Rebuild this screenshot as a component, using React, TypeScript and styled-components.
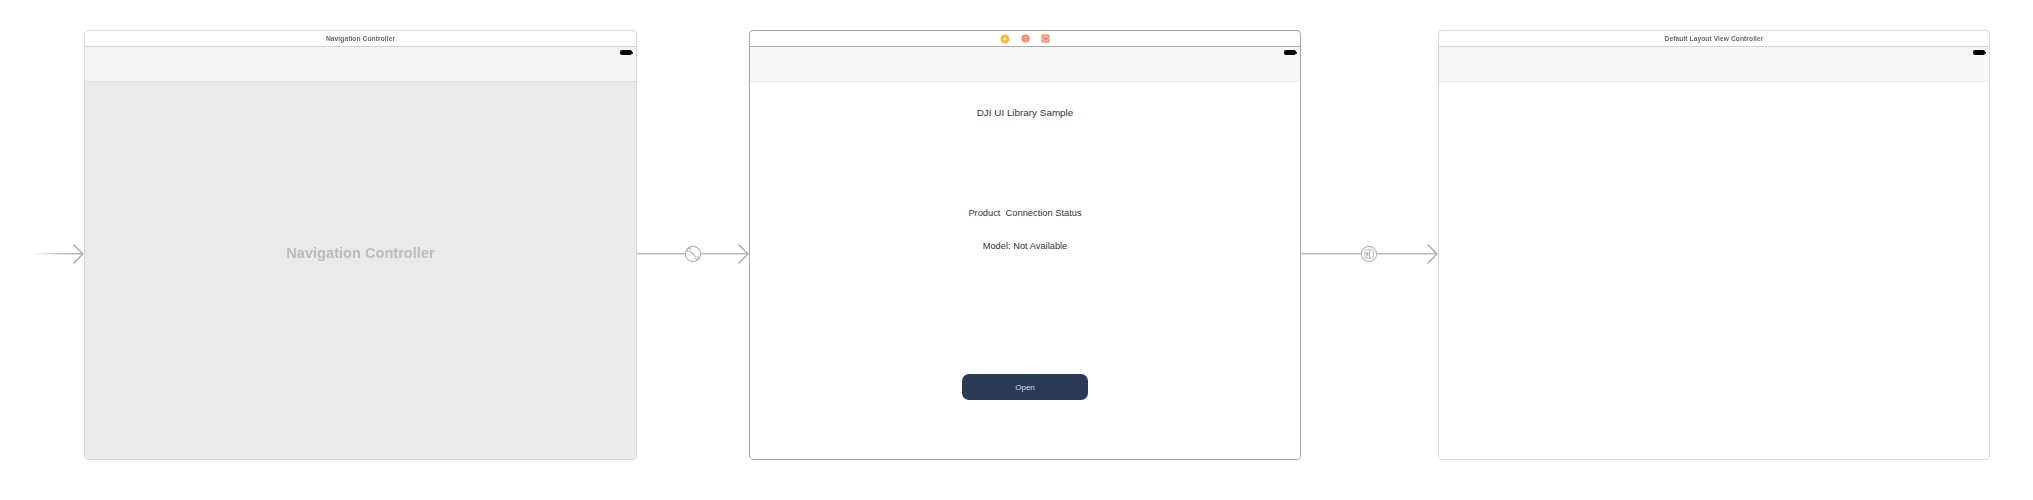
import React from "react";
import styled, { createGlobalStyle } from "styled-components";

const Global = createGlobalStyle`
  html, body { margin: 0; padding: 0; background: #ffffff; }
  body { font-family: "Liberation Sans", Arial, sans-serif; }
`;

const Canvas = styled.div`
  display: flex;
  align-items: stretch;
  width: 2033px;
  height: 500px;
  box-sizing: border-box;
  padding: 30px 0 40px 32px;
  overflow: hidden;
  filter: blur(0.35px);
`;

const Connector = styled.div<{ $w: number }>`
  flex: none;
  width: ${(p) => p.$w}px;
  padding-top: 17px;
  display: flex;
  align-items: center;
  svg { display: block; }
`;

const Scene = styled.section<{ $selected?: boolean; $w?: number }>`
  flex: none;
  width: ${(p) => p.$w ?? 552}px;
  box-sizing: border-box;
  display: flex;
  flex-direction: column;
  background: #fff;
  border: 1px solid ${(p) => (p.$selected ? "#a3a3a3" : "#d8d8d8")};
  border-radius: 4px;
  overflow: hidden;
`;

const TitleBar = styled.header<{ $selected?: boolean }>`
  flex: none;
  height: 15px;
  display: flex;
  align-items: center;
  justify-content: center;
  gap: 11px;
  border-bottom: 1px solid ${(p) => (p.$selected ? "#a9a9a9" : "#d2d2d2")};
  font-size: 6.6px;
  font-weight: 700;
  color: #666;
  letter-spacing: 0.1px;
`;

const NavBar = styled.div<{ $shade: string; $rule: string }>`
  flex: none;
  height: 35px;
  box-sizing: border-box;
  display: flex;
  justify-content: flex-end;
  align-items: flex-start;
  padding: 3px 3px 0 0;
  background: ${(p) => p.$shade};
  border-bottom: 1px solid ${(p) => p.$rule};
`;

const Battery = styled.span`
  position: relative;
  display: block;
  width: 12px;
  height: 5px;
  margin-right: 1px;
  border-radius: 2px;
  background: #000;
  &::after {
    content: "";
    position: absolute;
    right: -1px;
    top: 1.5px;
    width: 1px;
    height: 2px;
    background: #333;
  }
`;

const Placeholder = styled.div`
  flex: 1;
  display: flex;
  align-items: center;
  justify-content: center;
  padding-bottom: 35px;
  background: #eaeaea;
  color: #bcbcbc;
  font-size: 14.6px;
  font-weight: 700;
`;

const Screen = styled.div`
  flex: 1;
  display: flex;
  flex-direction: column;
  align-items: center;
  background: #fff;
  color: #333;
`;

const Label = styled.div<{ $top: number }>`
  margin-top: ${(p) => p.$top}px;
  font-size: 9.3px;
  line-height: 14px;
  white-space: pre;
`;

const Heading = styled(Label)`
  font-size: 9.9px;
`;

const OpenButton = styled.button`
  margin-top: 121px;
  width: 126px;
  height: 26px;
  border: none;
  border-radius: 7px;
  background: #2b3b57;
  color: #d5d9e1;
  font: 400 8px "Liberation Sans", Arial, sans-serif;
  padding: 0;
`;

const Arrow = ({ w, fade, badge, kind }: { w: number; fade?: boolean; badge?: number; kind?: "tool" | "split" }) => (
  <svg width={w} height="22" viewBox={`0 0 ${w} 22`} fill="none">
    <defs>
      <linearGradient id="fadeLine" x1="0" x2="1" y1="0" y2="0">
        <stop offset="0" stopColor="#bbb" stopOpacity="0" />
        <stop offset="0.6" stopColor="#bbb" />
        <stop offset="1" stopColor="#aaa" />
      </linearGradient>
    </defs>
    <rect x="0" y="10" width={w - 1} height="1.4" fill={fade ? "url(#fadeLine)" : "#b5b5b5"} />
    <path d={`M${w - 10.5} 1.5 L${w - 1} 11 L${w - 10.5} 20.5`} stroke="#a6a6a6" strokeWidth="1.4" />
    {badge !== undefined && (
      <g transform={`translate(${badge} 11)`}>
        <circle r="7.6" fill="#fff" stroke="#b5b5b5" strokeWidth="1.1" />
        {kind === "tool" ? (
          <path d="M-3.2 -3.2 L3.2 3.2 M-4.2 -2.4 A1.8 1.8 0 1 1 -2.4 -4.2 M2.6 4 A1.4 1.4 0 1 0 4 2.6" stroke="#b0b0b0" strokeWidth="1.1" />
        ) : (
          <g stroke="#b0b0b0" strokeWidth="0.9">
            <rect x="-4.2" y="-4.2" width="8.4" height="8.4" rx="0.8" />
            <path d="M0.6 -4.2 V4.2" />
            <rect x="-2.8" y="-1.6" width="2.2" height="3.2" fill="#b0b0b0" stroke="none" />
          </g>
        )}
      </g>
    )}
  </svg>
);

const SceneIcons = () => (
  <>
    <svg width="10" height="10" viewBox="0 0 10 10">
      <circle cx="5" cy="5" r="4.5" fill="#f5b82e" />
      <circle cx="5" cy="5" r="1.4" fill="#fff" />
    </svg>
    <svg width="9" height="9" viewBox="0 0 9 9">
      <circle cx="4.5" cy="4.5" r="4" fill="#f0876a" />
      <path d="M2 3.2 H7 M4.5 3.2 V7" stroke="#fbd3c7" strokeWidth="0.8" />
    </svg>
    <svg width="9" height="9" viewBox="0 0 9 9">
      <rect x="0.5" y="0.5" width="8" height="8" fill="#f28a6c" />
      <rect x="2" y="2.5" width="5" height="4" rx="1" fill="none" stroke="#fbd3c7" strokeWidth="0.8" />
    </svg>
  </>
);

export default function App() {
  return (
    <>
      <Global />
      <Canvas>
        <Connector $w={52}>
          <Arrow w={52} fade />
        </Connector>
        <Scene $w={553}>
          <TitleBar>Navigation Controller</TitleBar>
          <NavBar $shade="#f4f4f4" $rule="#dedede">
            <Battery />
          </NavBar>
          <Placeholder>Navigation Controller</Placeholder>
        </Scene>
        <Connector $w={112}>
          <Arrow w={112} badge={56} kind="tool" />
        </Connector>
        <Scene $selected>
          <TitleBar $selected>
            <SceneIcons />
          </TitleBar>
          <NavBar $shade="#f8f8f8" $rule="#ececec">
            <Battery />
          </NavBar>
          <Screen>
            <Heading $top={24}>DJI UI Library Sample</Heading>
            <Label $top={86}>{"Product  Connection Status"}</Label>
            <Label $top={19}>Model: Not Available</Label>
            <OpenButton>Open</OpenButton>
          </Screen>
        </Scene>
        <Connector $w={137}>
          <Arrow w={137} badge={68} kind="split" />
        </Connector>
        <Scene>
          <TitleBar>Default Layout View Controller</TitleBar>
          <NavBar $shade="#f8f8f8" $rule="#ececec">
            <Battery />
          </NavBar>
          <Screen />
        </Scene>
      </Canvas>
    </>
  );
}
